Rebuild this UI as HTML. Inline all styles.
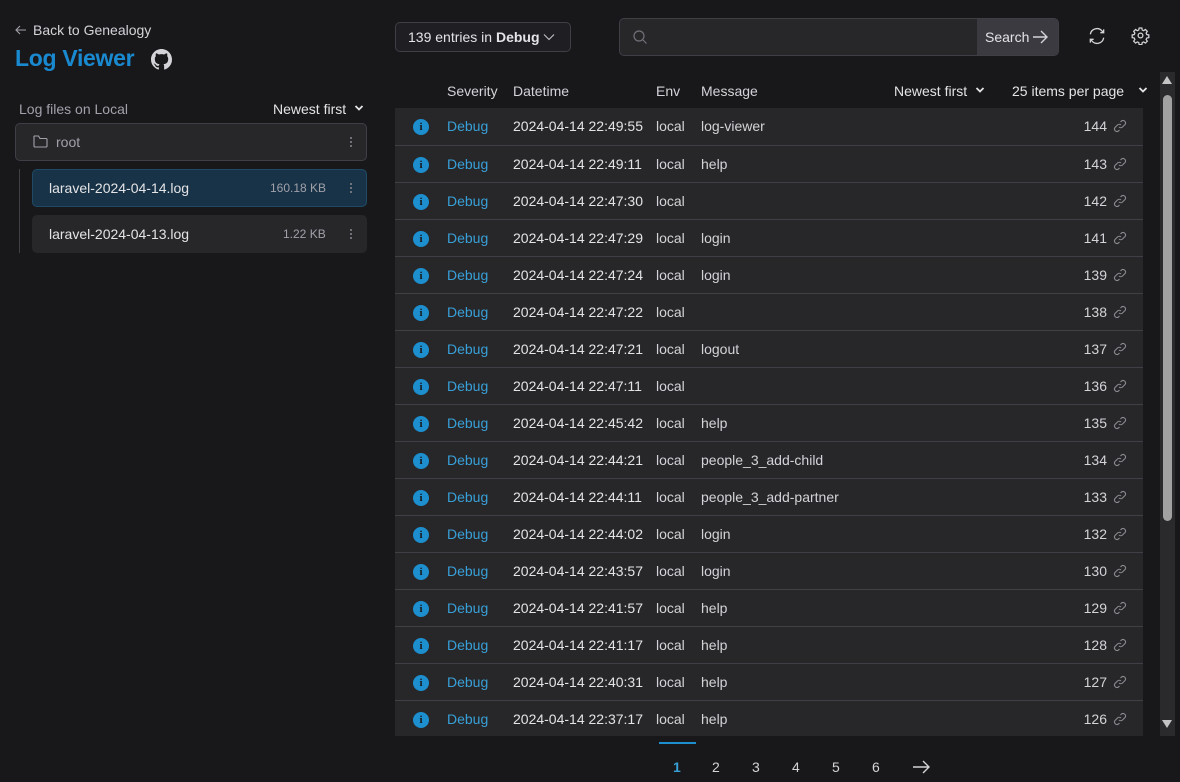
<!DOCTYPE html>
<html><head><meta charset="utf-8"><style>
*{box-sizing:border-box;margin:0;padding:0}
body{width:1180px;height:782px;background:#18181b;font-family:"Liberation Sans",sans-serif;color:#e4e4e7;position:relative;overflow:hidden;font-size:14px}
.a{position:absolute}
.row{position:absolute;left:395px;width:748px;height:37px;background:#27272a;border-top:1px solid #3f3f46}
.row span{position:absolute;top:10px;font-size:14px;white-space:nowrap}
.ic{position:absolute;left:18px;top:11px;width:16px;height:16px;border-radius:50%;background:#1d8fcf;color:#18181b;font-size:11px;font-weight:bold;text-align:center;line-height:16px;font-family:"Liberation Serif",serif}
.dbg{left:52px;color:#38a0d8}
.dt{left:118px;color:#e4e4e7}
.env{left:261px;color:#d4d4d8}
.msg{left:306px;color:#d4d4d8}
.num{right:36px;color:#d4d4d8}
.lk{position:absolute;right:16px;top:11px}
.hd{position:absolute;top:83px;font-size:14px;color:#d4d4d8}
.pg{position:absolute;top:759px;font-size:14px;color:#d4d4d8}
.kb{position:absolute;width:3px}
.kb i{display:block;width:2px;height:2px;background:#8a8a90;border-radius:1px;margin-bottom:2px}
</style></head><body>
<svg class="a" style="left:15px;top:25px" width="12" height="10" viewBox="0 0 12 10"><path d="M11 5H1.5M5 1L1 5l4 4" fill="none" stroke="#a1a1aa" stroke-width="1.1"/></svg>
<div class="a" style="left:33px;top:22px;font-size:14px;color:#d4d4d8">Back to Genealogy</div>
<div class="a" style="left:15px;top:45px;font-size:23px;font-weight:bold;color:#1a8ad0;letter-spacing:-0.3px">Log Viewer</div>
<svg class="a" style="left:151px;top:49px" width="21" height="21" viewBox="0 0 16 16"><path fill="#d4d4d8" d="M8 0C3.58 0 0 3.58 0 8c0 3.54 2.290 6.53 5.47 7.59.4.07.55-.17.55-.38v-1.33c-2.230.48-2.7-1.07-2.7-1.07-.36-.92-.89-1.17-.89-1.17-.73-.5.06-.49.06-.49.8.06 1.23.83 1.23.83.71 1.22 1.87.87 2.33.66.07-.52.28-.87.5-1.07-1.78-.2-3.64-.89-3.64-3.95 0-.87.31-1.59.82-2.15-.08-.2-.36-1.02.08-2.12 0 0 .67-.21 2.2.82a7.6 7.6 0 014 0c1.53-1.04 2.2-.82 2.2-.82.44 1.1.16 1.92.08 2.12.51.56.82 1.27.82 2.15 0 3.07-1.87 3.75-3.65 3.95.29.25.54.73.54 1.48v2.2c0 .21.15.46.55.38A8.01 8.01 0 0016 8c0-4.420-3.58-8-8-8z"/></svg>
<div class="a" style="left:19px;top:101px;color:#a1a1aa">Log files on Local</div>
<div class="a" style="left:273px;top:101px;color:#e4e4e7">Newest first</div>
<svg class="a" style="left:354px;top:104px" width="10" height="8" viewBox="0 0 10 8"><path d="M1.5 2l3.5 3.5L8.5 2" fill="none" stroke="#e4e4e7" stroke-width="1.8"/></svg>
<div class="a" style="left:15px;top:123px;width:352px;height:38px;background:#27272a;border:1px solid #3f3f46;border-radius:5px"></div>
<svg class="a" style="left:33px;top:135px" width="15" height="13" viewBox="0 0 15 13"><path d="M1 2.5v8.5a1 1 0 001 1h11a1 1 0 001-1V4.5a1 1 0 00-1-1H7L5.5 1H2a1 1 0 00-1 1.5z" fill="none" stroke="#a1a1aa" stroke-width="1.1"/></svg>
<div class="a" style="left:56px;top:134px;color:#a1a1aa">root</div>
<div class="kb" style="left:350px;top:137px"><i></i><i></i><i></i></div>
<div class="a" style="left:19px;top:169px;width:1px;height:84px;background:#3f3f46"></div>
<div class="a" style="left:32px;top:169px;width:335px;height:38px;background:#183347;border:1px solid #1e4a66;border-radius:5px"></div>
<div class="a" style="left:49px;top:180px;color:#e4e4e7">laravel-2024-04-14.log</div>
<div class="a" style="left:270px;top:181px;color:#a1a1aa;font-size:12px">160.18 KB</div>
<div class="kb" style="left:350px;top:183px"><i></i><i></i><i></i></div>
<div class="a" style="left:32px;top:215px;width:335px;height:38px;background:#27272a;border-radius:5px"></div>
<div class="a" style="left:49px;top:226px;color:#e4e4e7">laravel-2024-04-13.log</div>
<div class="a" style="left:283px;top:227px;color:#a1a1aa;font-size:12px">1.22 KB</div>
<div class="kb" style="left:350px;top:229px"><i></i><i></i><i></i></div>

<div class="a" style="left:395px;top:22px;width:176px;height:30px;border:1px solid #3f3f46;border-radius:5px;background:#1f1f23"></div>
<div class="a" style="left:408px;top:29px;color:#e4e4e7">139 entries in <b>Debug</b></div>
<svg class="a" style="left:543px;top:33px" width="12" height="8" viewBox="0 0 12 8"><path d="M1 1.5l5 5 5-5" fill="none" stroke="#c4c4c8" stroke-width="1.1"/></svg>
<div class="a" style="left:619px;top:18px;width:440px;height:38px;border:1px solid #3f3f46;border-radius:5px;background:#27272a"></div>
<div class="a" style="left:977px;top:19px;width:81px;height:36px;background:#3a3a40;border-radius:0 4px 4px 0"></div>
<svg class="a" style="left:632px;top:29px" width="16" height="16" viewBox="0 0 16 16"><circle cx="7" cy="7" r="5" fill="none" stroke="#71717a" stroke-width="1.2"/><path d="M11 11l3.5 3.5" stroke="#71717a" stroke-width="1.2"/></svg>
<div class="a" style="left:985px;top:29px;color:#e4e4e7">Search</div>
<svg class="a" style="left:1031px;top:28px" width="18" height="18" viewBox="0 0 18 18"><path d="M2 9h14M10 3l6 6-6 6" fill="none" stroke="#d4d4d8" stroke-width="1.4"/></svg>
<svg class="a" style="left:1087px;top:26px" width="20" height="20" viewBox="0 0 24 24" fill="none" stroke="#d4d4d8" stroke-width="1.6"><path d="M4 10a8 8 0 0114-4l2 2M20 4v4h-4M20 14a8 8 0 01-14 4l-2-2M4 20v-4h4"/></svg>
<svg class="a" style="left:1131px;top:26px" width="19" height="19" viewBox="0 0 24 24" fill="none" stroke="#d4d4d8" stroke-width="1.6"><path d="M10.3 2.5h3.4l.5 2.6 1.8.8 2.2-1.5 2.4 2.4-1.5 2.2.8 1.8 2.6.5v3.4l-2.6.5-.8 1.8 1.5 2.2-2.4 2.4-2.2-1.5-1.8.8-.5 2.6h-3.4l-.5-2.6-1.8-.8-2.2 1.5-2.4-2.4 1.5-2.2-.8-1.8-2.6-.5v-3.4l2.6-.5.8-1.8-1.5-2.2 2.4-2.4 2.2 1.5 1.8-.8z"/><circle cx="12" cy="12" r="3"/></svg>

<div class="hd" style="left:447px">Severity</div>
<div class="hd" style="left:513px">Datetime</div>
<div class="hd" style="left:656px">Env</div>
<div class="hd" style="left:701px">Message</div>
<div class="hd" style="left:894px;color:#e4e4e7">Newest first</div>
<svg class="a" style="left:975px;top:86px" width="10" height="8" viewBox="0 0 10 8"><path d="M1.5 2l3.5 3.5L8.5 2" fill="none" stroke="#e4e4e7" stroke-width="1.8"/></svg>
<div class="hd" style="left:1012px;color:#e4e4e7">25 items per page</div>
<svg class="a" style="left:1138px;top:86px" width="10" height="8" viewBox="0 0 10 8"><path d="M1.5 2l3.5 3.5L8.5 2" fill="none" stroke="#e4e4e7" stroke-width="1.8"/></svg>

<div id="rows"></div>
<div class="a" style="left:1160px;top:72px;width:15px;height:664px;background:#2a2a2d"></div>
<div class="a" style="left:1163px;top:95px;width:9px;height:426px;background:#a1a1a1;border-radius:5px"></div>
<div class="a" style="left:1162px;top:76px;width:0;height:0;border-left:5.5px solid transparent;border-right:5.5px solid transparent;border-bottom:8px solid #c4c4c4"></div>
<div class="a" style="left:1162px;top:720px;width:0;height:0;border-left:5.5px solid transparent;border-right:5.5px solid transparent;border-top:8px solid #c4c4c4"></div>

<div class="a" style="left:659px;top:742px;width:37px;height:2px;background:#1d8fcf"></div>
<div class="pg" style="left:673px;color:#38a0d8;font-weight:bold">1</div>
<div class="pg" style="left:712px">2</div>
<div class="pg" style="left:752px">3</div>
<div class="pg" style="left:792px">4</div>
<div class="pg" style="left:832px">5</div>
<div class="pg" style="left:872px">6</div>
<svg class="a" style="left:912px;top:759px" width="18" height="16" viewBox="0 0 18 16"><path d="M1 8h16M11 2l6 6-6 6" fill="none" stroke="#d4d4d8" stroke-width="1.4"/></svg>

<script>
var d=[["22:49:55","log-viewer",144],["22:49:11","help",143],["22:47:30","",142],["22:47:29","login",141],["22:47:24","login",139],["22:47:22","",138],["22:47:21","logout",137],["22:47:11","",136],["22:45:42","help",135],["22:44:21","people_3_add-child",134],["22:44:11","people_3_add-partner",133],["22:44:02","login",132],["22:43:57","login",130],["22:41:57","help",129],["22:41:17","help",128],["22:40:31","help",127],["22:37:17","help",126]];
var h="";d.forEach(function(r,i){var t=108+i*37;h+='<div class="row" style="top:'+t+'px;height:'+(i==16?36:37)+'px;'+(i==0?'border-top:none':'')+'"><div class="ic">i</div><span class="dbg">Debug</span><span class="dt">2024-04-14 '+r[0]+'</span><span class="env">local</span><span class="msg">'+r[1]+'</span><span class="num">'+r[2]+'</span><svg class="lk" width="14" height="14" viewBox="0 0 14 14" fill="none" stroke="#8a8a90" stroke-width="1.1"><path d="M6 8a2.5 2.5 0 003.5 0l2.5-2.5a2.5 2.5 0 00-3.5-3.5L7.5 3"/><path d="M8 6a2.5 2.5 0 00-3.5 0L2 8.5A2.5 2.5 0 005.5 12l1-1"/></svg></div>';});
document.getElementById("rows").innerHTML=h;
</script>
</body></html>
